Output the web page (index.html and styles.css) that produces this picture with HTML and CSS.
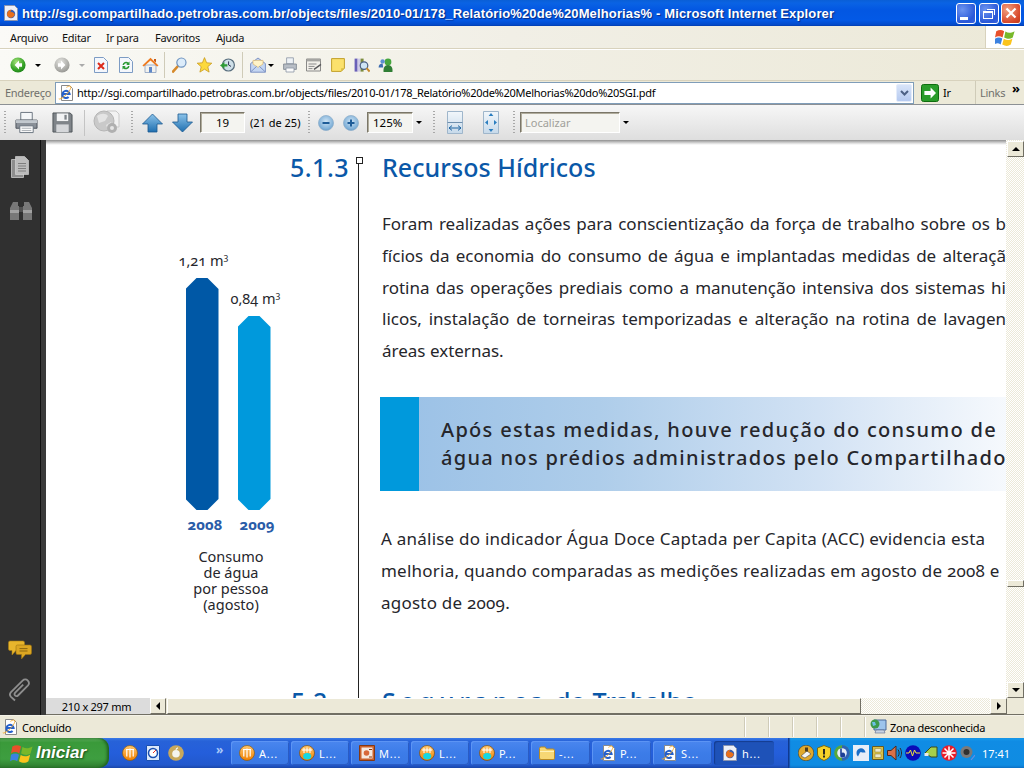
FILE: index.html
```html
<!DOCTYPE html>
<html lang="pt-BR">
<head>
<meta charset="utf-8">
<title>Relatório de Melhorias do SGI</title>
<link rel="stylesheet" href="styles.css">
</head>
<body>
<svg class="defs" width="0" height="0" aria-hidden="true">
  <defs>
    <radialGradient id="gGreen" cx=".4" cy=".3" r=".8"><stop offset="0" stop-color="#a6e27a"/><stop offset=".6" stop-color="#3aa52a"/><stop offset="1" stop-color="#127a12"/></radialGradient>
    <radialGradient id="gGray" cx=".4" cy=".3" r=".8"><stop offset="0" stop-color="#e4e4e0"/><stop offset="1" stop-color="#8e8e8a"/></radialGradient>
    <radialGradient id="gBtn" cx=".5" cy=".4" r=".7"><stop offset="0" stop-color="#cfe4f5"/><stop offset=".7" stop-color="#7fb0d8"/><stop offset="1" stop-color="#4d86b8"/></radialGradient>
    <linearGradient id="gArrow" x1="0" y1="0" x2="0" y2="1"><stop offset="0" stop-color="#8cc3ea"/><stop offset="1" stop-color="#1f6fb0"/></linearGradient>
    <linearGradient id="gOrange" x1="0" y1="0" x2="0" y2="1"><stop offset="0" stop-color="#ffc870"/><stop offset="1" stop-color="#f08000"/></linearGradient>
    <linearGradient id="gFit" x1="0" y1="0" x2="0" y2="1"><stop offset="0" stop-color="#f2f7fb"/><stop offset="1" stop-color="#c6d9ea"/></linearGradient>
    <symbol id="iBack" viewBox="0 0 16 16"><circle cx="8" cy="8" r="7.600" fill="url(#gGreen)"/><path d="M9 3.600 4.600 8 9 12.400V9.800h3V6.200H9z" fill="#fff"/></symbol>
    <symbol id="iFwd" viewBox="0 0 16 16"><circle cx="8" cy="8" r="7.600" fill="url(#gGray)"/><path d="M7 3.600 11.400 8 7 12.400V9.800H4V6.200h3z" fill="#fff"/></symbol>
    <symbol id="iStop" viewBox="0 0 14 16"><path d="M.5.5h9l4 4v11H.5z" fill="#f4f7fc" stroke="#7d9cc4"/><path d="M4 6l6 6m0-6-6 6" stroke="#dc2a1a" stroke-width="2"/></symbol>
    <symbol id="iRefresh" viewBox="0 0 14 16"><path d="M.5.5h9l4 4v11H.5z" fill="#f4f7fc" stroke="#7d9cc4"/><path d="M3.500 8a3.600 3.600 0 0 1 6-2.400l1-1v3.400H7.200l1.100-1.100A2 2 0 0 0 5 8zM10.500 9a3.600 3.600 0 0 1-6 2.400l-1 1V9h3.300l-1.100 1.100A2 2 0 0 0 9 9z" fill="#2b9a35"/></symbol>
    <symbol id="iHome" viewBox="0 0 17 16"><path d="M3 8h11v7.500H3z" fill="#f2f2ee" stroke="#8aa0c0" stroke-width=".8"/><path d="M7 10h3v5.500H7z" fill="#5f88c8"/><path d="M.4 8.600 8.500.8l8 7.800-1.400 1L8.500 3.400 1.800 9.600z" fill="#ee7a1e"/><path d="M12 2h2v3.500L12 4z" fill="#c95a14"/></symbol>
    <symbol id="iSearch" viewBox="0 0 15 16"><path d="M1 14.600 6 9" stroke="#d68a2c" stroke-width="2.600" stroke-linecap="round"/><circle cx="9.400" cy="5.600" r="4.600" fill="#dcecfa" stroke="#6f94c0" stroke-width="1.200"/></symbol>
    <symbol id="iStar" viewBox="0 0 15 16"><path d="M7.500.6l2.100 5.200 5.200.4-4 3.500 1.300 5.400-4.600-2.900-4.600 2.900 1.300-5.400-4-3.500 5.200-.4z" fill="#fcd93c" stroke="#c99a20" stroke-width=".8"/></symbol>
    <symbol id="iHist" viewBox="0 0 15 16"><circle cx="8.400" cy="8" r="6" fill="#cfe0e8" stroke="#566c7c" stroke-width="1.200"/><path d="M8.600 4.400V8l2.400 1.400" stroke="#335" fill="none"/><path d="M0 8.400 4.400 5v2.200h3v2.400h-3v2.200z" fill="#2d9a35"/></symbol>
    <symbol id="iMail" viewBox="0 0 16 16"><path d="M.6 6.600 8 1l7.400 5.600v8.600H.6z" fill="#c4d6f2" stroke="#7f93c4"/><path d="M3 7V3.400h10V7L8 10.400z" fill="#fff3c8" stroke="#d8b060" stroke-width=".6"/><path d="M.8 14.800 6.600 9.400M15.200 14.800 9.400 9.400" stroke="#7f93c4"/></symbol>
    <symbol id="iPrintS" viewBox="0 0 14 16"><path d="M3.600.8h6.800v6H3.600z" fill="#eef2f6" stroke="#8a96a4" stroke-width=".8"/><path d="M.6 7h12.800v5.400H.6z" fill="#b8bec6" stroke="#7a828c" stroke-width=".8"/><path d="M3 11h8v4H3z" fill="#fbfbfb" stroke="#8a96a4" stroke-width=".8"/></symbol>
    <symbol id="iEdit" viewBox="0 0 16 16"><path d="M.5 2h14v12H.5z" fill="#f2f0ea" stroke="#8a8a88"/><path d="M.5 2h14v2.400H.5z" fill="#a5a5a2"/><path d="M2.500 7h8M2.500 9.400h6M2.500 11.600h4" stroke="#8c8c8c"/><path d="M8 12.400l7-5" stroke="#58585a" stroke-width="1.400"/></symbol>
    <symbol id="iNote" viewBox="0 0 14 14"><path d="M.6.6h12.800v9.600l-3.200 3.200H.6z" fill="#fbe16c" stroke="#c2a02c"/><path d="M10.200 13.400v-3.200h3.200z" fill="#d8bc40"/></symbol>
    <symbol id="iRes" viewBox="0 0 16 16"><path d="M.6 1.600h3v13h-3z" fill="#6a60b8"/><path d="M3.600 1.600h3v13h-3z" fill="#d0cce8"/><path d="M6.600 1.600h3v13h-3z" fill="#7b8c3c"/><circle cx="10" cy="8.600" r="3.800" fill="#cfe5f5" stroke="#4a5f80" stroke-width="1.200"/><path d="M12.600 11.200l3 3.400" stroke="#c88a2a" stroke-width="2"/></symbol>
    <symbol id="iMsn" viewBox="0 0 16 16"><circle cx="10" cy="5" r="3.400" fill="#46a63e"/><path d="M5.600 15c-.6-4 1-7 4.400-7s5 3 4.400 7z" fill="#2f7e34"/><circle cx="4.600" cy="4.400" r="2.200" fill="#5c8fd0"/><path d="M.6 10.400c0-2.400 1.600-4 4-4l.6 4z" fill="#3c6cb0"/></symbol>
    <symbol id="iIE" viewBox="0 0 16 16"><path d="M3.500.5h8l3 3v12h-11z" fill="#fff" stroke="#8a8a8a"/><path d="M4.800 9h6.800a3.600 3.600 0 1 0-1 3" fill="none" stroke="#2460cc" stroke-width="2"/><path d="M.8 13.800c1 1 5-1.400 8.600-5.400 3-3.400 4.200-6.400 3-7.200-.8-.4-2.600.2-4 1.200" fill="none" stroke="#f2a92c" stroke-width=".9"/></symbol>
    <symbol id="iGo" viewBox="0 0 18 18"><rect x=".5" y=".5" width="17" height="17" rx="2" fill="#2a9c2a" stroke="#0f6d0f"/><path d="M9.600 3.400 15 9l-5.400 5.600V11H3.400V7h6.200z" fill="#fff"/></symbol>
    <symbol id="iFox" viewBox="0 0 16 16"><path d="M1.500.5h10l3 3v12h-13z" fill="#eef0f8" stroke="#8a94b0"/><circle cx="8" cy="9" r="4.200" fill="#3a5fb0"/><path d="M4 9.600c0-3 2-4.800 4.600-4.800-1 .8-1.200 1.600-1 2.400 1.600-.4 3.600.6 4.200 2.400-.6 2-2.200 3.200-4 3.200-2 0-3.800-1.400-3.800-3.200z" fill="#e8701c"/></symbol>
    <symbol id="iPrint" viewBox="0 0 24 24"><path d="M6 1.500h12v8H6z" fill="#f4f6f8" stroke="#6a7480"/><path d="M1 9.500h22v8.500H1z" fill="#8a9098" stroke="#4c545c"/><path d="M1 9.500h22v3H1z" fill="#c2c8ce"/><path d="M5 15.500h14v7H5z" fill="#fbfbfb" stroke="#6a7480"/><path d="M7 18h10M7 20.400h10" stroke="#a8aeb4"/></symbol>
    <symbol id="iSave" viewBox="0 0 22 22"><path d="M1 1h18l2 2v18H1z" fill="#7f8489" stroke="#4e5358"/><path d="M5 1.500h12v8H5z" fill="#f2f3f4"/><path d="M13 3h2.400v5H13z" fill="#7f8489"/><path d="M4.500 13h13v8h-13z" fill="#d5d7da"/></symbol>
    <symbol id="iGlobe" viewBox="0 0 27 25"><path d="M14 1h9l3 3v13H14z" fill="#f2f2f2" stroke="#c9c9c9"/><circle cx="11" cy="11" r="10" fill="#c9c9c9" stroke="#b5b5b5"/><path d="M4 6c4-3 9-3 11 0l-3 5-6 2zM13 15l5-3 1 5-4 3z" fill="#e4e4e4"/><circle cx="19" cy="18" r="5" fill="#b0b0b0"/><circle cx="19" cy="18" r="2" fill="#e6e6e6"/></symbol>
    <symbol id="iUp" viewBox="0 0 21 20"><path d="M10.500 1 20.500 11H15v8H6v-8H.5z" fill="url(#gArrow)" stroke="#19598f" stroke-width=".8"/></symbol>
    <symbol id="iDown" viewBox="0 0 21 20"><path d="M10.500 19 20.500 9H15V1H6v8H.5z" fill="url(#gArrow)" stroke="#19598f" stroke-width=".8"/></symbol>
    <symbol id="iMinus" viewBox="0 0 16 16"><circle cx="8" cy="8" r="7.500" fill="url(#gBtn)" stroke="#8fb0cc" stroke-width=".8"/><path d="M4.500 7h7v2h-7z" fill="#1e5c98"/></symbol>
    <symbol id="iPlus" viewBox="0 0 16 16"><circle cx="8" cy="8" r="7.500" fill="url(#gBtn)" stroke="#8fb0cc" stroke-width=".8"/><path d="M7 4.500h2V7h2.500v2H9v2.500H7V9H4.500V7H7z" fill="#1e5c98"/></symbol>
    <symbol id="iFitW" viewBox="0 0 16 23"><path d="M.5.5h15v22H.5z" fill="url(#gFit)" stroke="#9fb6cb"/><path d="M.5 11.500h15" stroke="#6f8fad"/><path d="M2 17h12M2 17l3-2.400M2 17l3 2.400M14 17l-3-2.400M14 17l-3 2.400" stroke="#1f64a0" fill="none"/></symbol>
    <symbol id="iFitP" viewBox="0 0 16 23"><path d="M.5.5h15v22H.5z" fill="url(#gFit)" stroke="#9fb6cb"/><path d="M8 2 5.600 5h4.800zM8 21l-2.400-3h4.800zM2 11.500l3-2.400v4.800zM14 11.500l-3-2.400v4.800z" fill="#2b7ec0"/></symbol>
    <symbol id="iPages" viewBox="0 0 18 22"><path d="M.5 3.500h12v18H.5z" fill="#8d8d8d" stroke="#b4b4b4"/><path d="M4.500.5h9l4 4v14h-13z" fill="#bdbdbd" stroke="#dadada" stroke-width=".6"/><path d="M7 7.500h8M7 10h8M7 12.500h8M7 15h8" stroke="#7e7e7e"/></symbol>
    <symbol id="iBino" viewBox="0 0 22 18"><path d="M3 0h5v4h1v14H0V6zM19 0h-5v4h-1v14h9V6z" fill="#787878"/><path d="M0 8h9v3H0zM13 8h9v3h-9z" fill="#a2a2a2"/><path d="M9 5h4v5H9z" fill="#505050"/></symbol>
    <symbol id="iCmt" viewBox="0 0 24 20"><path d="M2 1h13q1.500 0 1.500 1.500V9q0 1.500-1.500 1.500H8L4 15v-4.500H2Q.5 10.500.5 9V2.500Q.5 1 2 1z" fill="#e8b52c" stroke="#a87e14" stroke-width=".6"/><path d="M9.500 5H22q1.500 0 1.500 1.500V13q0 1.500-1.500 1.500h-4.500L13.500 19v-4.500h-4Q8 14.500 8 13V6.500Q8 5 9.500 5z" fill="#dca622" stroke="#9c7410" stroke-width=".6"/><path d="M11.500 8.600h8M11.500 11h8" stroke="#8a6610"/></symbol>
    <symbol id="iClip" viewBox="0 0 22 24"><path d="M6 22.500 2 18.800c-1.400-1.400-1.200-3.300 0-4.600L13.600 2.600c1.600-1.600 3.800-1.500 5.200 0s1.400 3.600 0 5.100L9 17.500c-.9.900-2.100.9-2.900 0s-.7-2 .1-2.900l8-8" fill="none" stroke="#8e8e8e" stroke-width="1.800"/></symbol>
    <symbol id="iFlag" viewBox="0 0 24 24"><path d="M1.500 5C5 3 8 3 11 5l-2 7.500C6 10.500 3 10.500 0 12.500z" fill="#e8502a"/><path d="M12.500 5.500C16 7.500 19 7.500 23.500 5l-2.200 7.500c-3.300 2.200-6.300 2-10.300 0z" fill="#78b82a"/><path d="M0 14c3-2 6-2 8.700-.2L6.800 21C4 19 2 19-1 21z" fill="#3c82e0"/><path d="M10.600 14.200c3.400 2 6.400 2 10.300-.2L19 21c-3.400 2.400-6.400 2.200-10.300 0z" fill="#fbc41c"/></symbol>
    <symbol id="iOrange" viewBox="0 0 16 16"><circle cx="8" cy="8" r="7.500" fill="url(#gOrange)" stroke="#8a5a10" stroke-width=".7"/><path d="M4 4.500h8M4.800 4.500v7M8 3.500v9M11.200 4.500v7" stroke="#fff" stroke-width="1.200" fill="none"/></symbol>
    <symbol id="iOrangeC" viewBox="0 0 16 16"><circle cx="8" cy="8" r="7.500" fill="url(#gOrange)" stroke="#7a4a10" stroke-width=".7"/><path d="M3 5h10M5 3v5M8 2.500v5M11 3v5" stroke="#fff" stroke-width="1"/><ellipse cx="8.200" cy="11.300" rx="4" ry="3.200" fill="#12d8e6"/></symbol>
    <symbol id="iPpt" viewBox="0 0 16 16"><path d="M.5.5h15v15H.5z" fill="#c9602c" stroke="#843814"/><path d="M2.500 2.500h11v11h-11z" fill="#f6e9e0"/><circle cx="7.500" cy="8" r="2.800" fill="#d8683a"/><path d="M10 11.500h3v1h-3zM10 4h3v1h-3z" fill="#843814"/></symbol>
    <symbol id="iFolder" viewBox="0 0 16 14"><path d="M.5 2.500Q.5 1 2 1h4l1.500 2H14q1.500 0 1.500 1.500v8Q15.500 13.500 14 13.500H2Q.5 13.500.5 12z" fill="#f7d774" stroke="#b88a24"/><path d="M1 5.500h14" stroke="#fff2b8"/></symbol>
    <symbol id="iQL" viewBox="0 0 16 16"><path d="M1.500.5h13v15h-13z" fill="#dbe8fa" stroke="#1a4fb0"/><circle cx="8" cy="8" r="4.500" fill="#fff" stroke="#1a4fb0" stroke-width="1.500"/><path d="M8 8l3-3" stroke="#e83020"/></symbol>
    <symbol id="iApple" viewBox="0 0 16 16"><circle cx="8" cy="8" r="7.800" fill="#c8a85c"/><circle cx="8" cy="8.800" r="3.800" fill="#f4f4f0"/><path d="M8 5c0-1.200.8-2 2-2.200" stroke="#f4f4f0" stroke-width="1.200" fill="none"/></symbol>
    <symbol id="iT1" viewBox="0 0 16 16"><circle cx="8" cy="8" r="7.800" fill="#e0a82c" stroke="#3a2a10" stroke-width=".5"/><path d="M3 11l6-5 4 3-6 4z" fill="#f4f4f4" stroke="#333" stroke-width=".5"/><path d="M7 2.500h3v4H7z" fill="#4a3c20"/></symbol>
    <symbol id="iT2" viewBox="0 0 14 16"><path d="M7 .5 13.500 3v6q0 4-6.500 6.500Q.5 13 .5 9V3z" fill="#f5d228" stroke="#7a6a18"/><path d="M6 4h2v5.500H6zM6 10.500h2v2H6z" fill="#2a2a20"/></symbol>
    <symbol id="iT3" viewBox="0 0 16 16"><circle cx="8" cy="8" r="7.800" fill="#58a83a"/><path d="M8 .2A7.800 7.800 0 0 1 8 15.800z" fill="#2d62b8"/><circle cx="8" cy="8" r="4.800" fill="#e8eef8"/><path d="M6.200 3.500h1.600v4.200a2.500 2.500 0 1 1-1.600 2z" fill="#1d3f96"/></symbol>
    <symbol id="iT4" viewBox="0 0 16 16"><path d="M0 0h16v16H0z" fill="#e8eef8"/><path d="M3.500 8a4.500 4.500 0 0 1 9-.5H9a1.500 1.500 0 0 0-2.500 1L5 11.500A4.500 4.500 0 0 1 3.500 8z" fill="#1a6ec8"/></symbol>
    <symbol id="iT5" viewBox="0 0 12 16"><path d="M.5 1.500h11v13H.5z" fill="#d8c048" stroke="#6a5a20"/><path d="M3 3.500h6v3.500H3zM3 9h6v3.500H3z" fill="#eee8c8" stroke="#8a7a30" stroke-width=".5"/></symbol>
    <symbol id="iT6" viewBox="0 0 15 16"><path d="M.5 5.500h3.500L9 1v14L4 10.500H.5z" fill="#d87048" stroke="#4a2a20"/><path d="M11 4.500c1.500 2 1.500 5 0 7M13 3c2 3 2 7 0 10" stroke="#2a2a2a" fill="none"/></symbol>
    <symbol id="iT7" viewBox="0 0 16 16"><circle cx="8" cy="8" r="7.800" fill="#0a0ab8"/><path d="M1 8h3l1.500-3 2 6 2-6 1.500 3h4" stroke="#f2e43c" fill="none"/></symbol>
    <symbol id="iT8" viewBox="0 0 14 14"><path d="M1 7 7 1h6v10H7z" fill="#a4d04a" stroke="#3a4a20"/><path d="M.5 7h4v3h-4z" fill="#eaeaea"/></symbol>
    <symbol id="iT9" viewBox="0 0 16 16"><circle cx="8" cy="8" r="7.800" fill="#e81c28"/><path d="M8 1.500v13M1.500 8h13M3.500 3.500l9 9M12.500 3.500l-9 9" stroke="#fff" stroke-width="1.500"/></symbol>
    <symbol id="iT10" viewBox="0 0 15 16"><circle cx="6.500" cy="7" r="6" fill="#7a7a7a"/><circle cx="6.500" cy="7" r="3" fill="#303030"/><path d="M11 15 15 10" stroke="#6a8ee0" stroke-width="1.200"/></symbol>
    <symbol id="iZone" viewBox="0 0 18 17"><path d="M4 1h12v10H4z" fill="#9cc4ec" stroke="#4a6a9a"/><path d="M6 11h8l1 3H5z" fill="#c8d4e4" stroke="#5a6a8a" stroke-width=".6"/><circle cx="5" cy="5" r="4.500" fill="#3c9a4c"/><path d="M2 3h3l1 3-3 1z" fill="#6fc0e8"/></symbol>
  </defs>
</svg>

<div class="window">
  <header class="titlebar">
    <svg class="title-ico" width="16" height="16"><use href="#iFox"/></svg>
    <span class="title-text">http://sgi.compartilhado.petrobras.com.br/objects/files/2010-01/178_Relatório%20de%20Melhorias% - Microsoft Internet Explorer</span>
    <div class="wbtns">
      <span class="wbtn"><span class="gl-min"></span></span>
      <span class="wbtn"><span class="gl-max"></span></span>
      <span class="wbtn wclose"><svg width="12" height="12" viewBox="0 0 12 12"><path d="M1.500 1.500l9 9m0-9-9 9" stroke="#fff" stroke-width="2.200"/></svg></span>
    </div>
  </header>

  <nav class="menubar">
    <span class="menu-item">Arquivo</span><span class="menu-item">Editar</span><span class="menu-item">Ir para</span><span class="menu-item">Favoritos</span><span class="menu-item">Ajuda</span>
    <div class="brand"><svg width="20" height="20"><use href="#iFlag"/></svg></div>
  </nav>

  <div class="ietools">
    <svg width="16" height="16"><use href="#iBack"/></svg><span class="caret ml9"></span>
    <svg class="ml13" width="16" height="16"><use href="#iFwd"/></svg><span class="caret caret-off ml9"></span>
    <svg class="ml9" width="14" height="16"><use href="#iStop"/></svg>
    <svg class="ml11" width="14" height="16"><use href="#iRefresh"/></svg>
    <svg class="ml9" width="17" height="16"><use href="#iHome"/></svg>
    <span class="vsep ml5"></span>
    <svg class="ml7" width="15" height="16"><use href="#iSearch"/></svg>
    <svg class="ml10" width="15" height="16"><use href="#iStar"/></svg>
    <svg class="ml8" width="15" height="16"><use href="#iHist"/></svg>
    <span class="vsep ml7"></span>
    <svg class="ml7" width="16" height="16"><use href="#iMail"/></svg><span class="caret ml2"></span>
    <svg class="ml9" width="14" height="16"><use href="#iPrintS"/></svg>
    <svg class="ml9" width="16" height="16"><use href="#iEdit"/></svg>
    <svg class="ml9" width="14" height="14"><use href="#iNote"/></svg>
    <svg class="ml9" width="16" height="16"><use href="#iRes"/></svg>
    <svg class="ml8" width="16" height="16"><use href="#iMsn"/></svg>
  </div>

  <div class="addressbar">
    <span class="addr-label">Endereço</span>
    <div class="addr-input">
      <svg width="16" height="16"><use href="#iIE"/></svg>
      <span class="addr-url">http://sgi.compartilhado.petrobras.com.br/objects/files/2010-01/178_Relatório%20de%20Melhorias%20do%20SGI.pdf</span>
      <span class="addr-drop"><svg width="9" height="6" viewBox="0 0 9 6"><path d="M1 1l3.500 3.500L8 1" fill="none" stroke="#4d6185" stroke-width="2"/></svg></span>
    </div>
    <svg class="go" width="18" height="18"><use href="#iGo"/></svg>
    <span class="go-text">Ir</span>
    <span class="links">Links</span>
    <span class="chev">»</span>
  </div>

  <div class="acrotools">
    <span class="grip"></span>
    <svg class="ml9" width="23" height="23"><use href="#iPrint"/></svg>
    <svg class="ml14" width="21" height="21"><use href="#iSave"/></svg>
    <span class="vsep vsep-g ml11"></span>
    <svg class="ml8" width="27" height="25"><use href="#iGlobe"/></svg>
    <span class="grip ml11"></span>
    <svg class="ml9" width="21" height="20"><use href="#iUp"/></svg>
    <svg class="ml9" width="21" height="20"><use href="#iDown"/></svg>
    <span class="field field-page ml7">19</span>
    <span class="pagecount">(21 de 25)</span>
    <span class="grip ml7"></span>
    <svg class="ml8" width="16" height="16"><use href="#iMinus"/></svg>
    <svg class="ml9" width="16" height="16"><use href="#iPlus"/></svg>
    <span class="field field-zoom ml8">125%</span>
    <span class="caret ml3"></span>
    <span class="grip ml11"></span>
    <svg class="ml12" width="16" height="23"><use href="#iFitW"/></svg>
    <svg class="ml20" width="16" height="23"><use href="#iFitP"/></svg>
    <span class="grip ml14"></span>
    <span class="field field-find ml5">Localizar</span>
    <span class="caret ml3"></span>
  </div>

  <main class="viewer">
    <aside class="navpanel">
      <svg class="nav-pages" width="18" height="22"><use href="#iPages"/></svg>
      <svg class="nav-bino" width="22" height="18"><use href="#iBino"/></svg>
      <svg class="nav-cmt" width="24" height="20"><use href="#iCmt"/></svg>
      <svg class="nav-clip" width="22" height="24"><use href="#iClip"/></svg>
    </aside>
    <div class="docarea">
      <div class="docrow">
        <article class="page">
          <div class="side">
            <h2 class="secnum">5.1.3</h2>
            <div class="chart">
              <div class="chart-col">
                <span class="chart-val">1,21 m<sup>3</sup></span>
                <span class="bar bar-a"></span>
                <span class="chart-year">2008</span>
              </div>
              <div class="chart-col">
                <span class="chart-val">0,84 m<sup>3</sup></span>
                <span class="bar bar-b"></span>
                <span class="chart-year">2009</span>
              </div>
            </div>
            <p class="caption">Consumo<br>de água<br>por pessoa<br>(agosto)</p>
          </div>
          <div class="main">
            <h2 class="sectitle">Recursos Hídricos</h2>
            <div class="para">
              <div class="jline">Foram realizadas ações para conscientização da força de trabalho sobre os b</div>
              <div class="jline">fícios da economia do consumo de água e implantadas medidas de alteraçã</div>
              <div class="jline">rotina das operações prediais como a manutenção intensiva dos sistemas hi</div>
              <div class="jline">licos, instalação de torneiras temporizadas e alteração na rotina de lavagen</div>
              <div class="pline">áreas externas.</div>
            </div>
            <div class="callout">
              <div class="callout-mark"></div>
              <p class="callout-text">Após estas medidas, houve redução do consumo de<br>água nos prédios administrados pelo Compartilhado</p>
            </div>
            <div class="para para2">
              <div class="pline">A análise do indicador Água Doce Captada per Capita (ACC) evidencia esta</div>
              <div class="pline">melhoria, quando comparadas as medições realizadas em agosto de 2008 e</div>
              <div class="pline">agosto de 2009.</div>
            </div>
          </div>
          <div class="side side2"><h2 class="secnum">5.2</h2></div>
          <div class="main main2"><h2 class="sectitle"><span class="word1">Segurança</span> do Trabalho</h2></div>
        </article>
        <div class="vscroll">
          <span class="sbtn"><span class="tri tri-up"></span></span>
          <span class="vtrack"><span class="vthumb"></span></span>
          <span class="sbtn"><span class="tri tri-down"></span></span>
        </div>
      </div>
      <div class="hscrollrow">
        <span class="pagesize">210 x 297 mm</span>
        <span class="sbtn sbtn-h"><span class="tri tri-left"></span></span>
        <span class="hthumb"></span>
        <span class="htrack"></span>
        <span class="sbtn sbtn-h sbtn-r"><span class="tri tri-right"></span></span>
        <span class="corner"></span>
      </div>
    </div>
  </main>

  <footer class="statusbar">
    <svg class="st-ico" width="16" height="16"><use href="#iIE"/></svg>
    <span class="st-text">Concluído</span>
    <span class="st-cell"></span><span class="st-cell"></span><span class="st-cell"></span><span class="st-cell"></span><span class="st-cell"></span>
    <span class="st-zone"><svg width="18" height="17"><use href="#iZone"/></svg>Zona desconhecida</span>
  </footer>

  <div class="taskbar">
    <div class="start"><svg width="24" height="22"><use href="#iFlag"/></svg><span>Iniciar</span></div>
    <div class="quick">
      <svg width="16" height="16"><use href="#iOrange"/></svg>
      <svg width="16" height="16"><use href="#iQL"/></svg>
      <svg width="16" height="16"><use href="#iApple"/></svg>
      <span class="quick-more">»</span>
    </div>
    <div class="tasks">
      <span class="task"><svg width="16" height="16"><use href="#iOrange"/></svg>A...</span>
      <span class="task"><svg width="16" height="16"><use href="#iOrangeC"/></svg>L...</span>
      <span class="task"><svg width="16" height="16"><use href="#iPpt"/></svg>M...</span>
      <span class="task"><svg width="16" height="16"><use href="#iOrangeC"/></svg>L...</span>
      <span class="task"><svg width="16" height="16"><use href="#iOrangeC"/></svg>P...</span>
      <span class="task"><svg width="16" height="14"><use href="#iFolder"/></svg>-...</span>
      <span class="task"><svg width="16" height="16"><use href="#iIE"/></svg>P...</span>
      <span class="task"><svg width="16" height="16"><use href="#iIE"/></svg>S...</span>
      <span class="task task-on"><svg width="16" height="16"><use href="#iFox"/></svg>h...</span>
    </div>
    <div class="tray">
      <svg width="16" height="16"><use href="#iT1"/></svg>
      <svg width="14" height="16"><use href="#iT2"/></svg>
      <svg width="16" height="16"><use href="#iT3"/></svg>
      <svg width="16" height="16"><use href="#iT4"/></svg>
      <svg width="12" height="16"><use href="#iT5"/></svg>
      <svg width="15" height="16"><use href="#iT6"/></svg>
      <svg width="16" height="16"><use href="#iT7"/></svg>
      <svg width="14" height="14"><use href="#iT8"/></svg>
      <svg width="16" height="16"><use href="#iT9"/></svg>
      <svg width="15" height="16"><use href="#iT10"/></svg>
      <span class="clock">17:41</span>
    </div>
  </div>
</div>
</body>
</html>
```

FILE: styles.css
```css
* { box-sizing: border-box; }
html, body { margin: 0; padding: 0; }
body { width: 1024px; height: 768px; overflow: hidden; font-family: "Noto Sans", "DejaVu Sans", sans-serif; font-size: 11px; letter-spacing: -.27px; color: #000; background: #ece9d8; }
.defs { position: absolute; }
svg { display: block; flex: none; }
.window { display: flex; flex-direction: column; width: 1024px; height: 768px; }

.ml2 { margin-left: 2px; } .ml3 { margin-left: 3px; } .ml5 { margin-left: 5px; } .ml7 { margin-left: 7px; }
.ml8 { margin-left: 8px; } .ml9 { margin-left: 9px; } .ml10 { margin-left: 10px; } .ml11 { margin-left: 11px; }
.ml12 { margin-left: 12px; } .ml13 { margin-left: 13px; } .ml14 { margin-left: 14px; } .ml20 { margin-left: 20px; }

/* Title bar */
.titlebar { height: 26px; flex: none; display: flex; align-items: center; padding-left: 3px; background: linear-gradient(180deg, #0a5fd6 0, #0a63e4 3px, #0357e2 10px, #0359e6 20px, #0349c8 25px, #023aa8 26px); }
.title-ico { margin-right: 3px; }
.title-text { color: #fff; font: bold 13px "Liberation Sans", sans-serif; letter-spacing: .14px; text-shadow: 1px 1px 1px #0a2a80; white-space: nowrap; }
.wbtns { margin-left: auto; display: flex; gap: 3px; padding-right: 3px; }
.wbtn { width: 20px; height: 21px; border: 1px solid #fff; border-radius: 3px; background: radial-gradient(circle at 30% 30%, #6c94f0, #2a58d8 70%, #3a66e0); display: flex; align-items: center; justify-content: center; position: relative; }
.wclose { background: radial-gradient(circle at 30% 30%, #f0a080, #d8482a 70%, #c03a18); margin-left: -1px; }
.gl-min { width: 8px; height: 3px; background: #fff; align-self: flex-end; margin: 0 4px 3px 0; }
.gl-max { width: 10px; height: 8px; border: 1px solid #fff; border-top-width: 2px; box-shadow: 2px -2px 0 -1px #3a66e0, 3px -3px 0 -1px #fff; margin-top: 3px; margin-right: 2px; }

/* Menu */
.menubar { height: 23px; flex: none; display: flex; align-items: center; padding-left: 10px; background: linear-gradient(90deg, #fbfaf7, #f1efe6 50%, #ece9d8); border-bottom: 1px solid #d8d2bd; }
.menu-item { margin-right: 16px; font-size: 11px; color: #111; white-space: nowrap; }
.menu-item:nth-child(1) { width: 36px; } .menu-item:nth-child(2) { width: 28px; } .menu-item:nth-child(3) { width: 33px; } .menu-item:nth-child(4) { width: 45px; }
.brand { margin-left: auto; width: 39px; height: 22px; background: #fff; border-left: 1px solid #d8d2bd; display: flex; align-items: center; justify-content: center; }

/* IE toolbar */
.ietools { height: 32px; flex: none; display: flex; align-items: center; padding-left: 10px; background: linear-gradient(90deg, #fafaf6, #f1efe5 50%, #ece9d8); border-top: 1px solid #fff; border-bottom: 1px solid #d8d2bd; }
.caret { width: 0; height: 0; flex: none; border-left: 3px solid transparent; border-right: 3px solid transparent; border-top: 3px solid #000; }
.caret-off { border-top-color: #aaa; }
.vsep { width: 1px; height: 26px; flex: none; background: #cfcbb8; }
.vsep-g { background: #c4c4c4; }

/* Address */
.addressbar { height: 23px; flex: none; display: flex; align-items: center; background: #ece9d8; padding-left: 5px; position: relative; }
.addr-label { width: 50px; color: #70706c; white-space: nowrap; }
.addr-input { width: 859px; height: 22px; background: #fff; border: 1px solid #7f9db9; display: flex; align-items: center; padding-left: 2px; }
.addr-url { margin-left: 3px; font-size: 11px; white-space: nowrap; flex: 1; }
.addr-drop { width: 16px; height: 18px; margin-right: 1px; background: linear-gradient(#d8e4f8, #b6caf0); border: 1px solid #e4ecfa; border-radius: 2px; display: flex; align-items: center; justify-content: center; }
.go { margin-left: 7px; }
.go-text { margin-left: 4px; width: 32px; }
.links { border-left: 1px solid #cfcbb8; padding-left: 4px; height: 23px; line-height: 23px; color: #70706c; width: 37px; }
.chev { font-size: 13px; line-height: 13px; align-self: flex-start; margin-top: 1px; font-weight: bold; }

/* Acrobat toolbar */
.acrotools { height: 36px; flex: none; display: flex; align-items: center; padding-left: 4px; background: linear-gradient(#f7f7f7, #dedede); border-top: 1px solid #8c9094; letter-spacing: 0; }
.grip { width: 2px; height: 24px; flex: none; background: repeating-linear-gradient(#a8a8a8 0 1px, transparent 1px 3px); }
.field { height: 21px; flex: none; display: flex; align-items: center; background: #f4f4f0; border: 1px solid #fff; border-top: 1px solid #7a7668; border-left: 1px solid #7a7668; box-shadow: inset 1px 1px 0 #b0ac9c; font-size: 11.500px; }
.field-page { width: 45px; justify-content: center; }
.field-zoom { width: 46px; padding-left: 5px; }
.field-find { width: 100px; padding-left: 4px; color: #a0a09a; font-size: 11px; }
.pagecount { margin-left: 5px; width: 51px; white-space: nowrap; }

/* Viewer */
.viewer { flex: 1; min-height: 0; display: flex; background: #2f2f2f; }
.navpanel { width: 46px; flex: none; position: relative; display: flex; flex-direction: column; align-items: center; padding: 16px 5px 0 0; background: linear-gradient(90deg, #303030 0 40px, #111 40px 41px, #3a3a3a 41px 46px); }
.nav-pages { margin: 0 2px 0 0; }
.nav-bino { margin-top: 24px; }
.nav-cmt { margin-top: 420px; margin-right: 2px; }
.nav-clip { margin-top: 18px; margin-right: 2px; }
.docarea { flex: 1; min-width: 0; display: flex; flex-direction: column; margin-left: -4px; }
.docrow { flex: 1; min-height: 0; display: flex; padding-left: 4px; }

.page { flex: 1; min-width: 0; overflow: hidden; display: grid; grid-template-columns: 312px 1fr; grid-template-rows: 529px auto; padding-top: 17px; background: #fff linear-gradient(#8f8f8f, #d8d8d8 3px, #ededed 4px, #fff 5px) no-repeat 0 0 / 100% 5px; color: #26262b; font-family: "Noto Sans", sans-serif; font-variant-numeric: oldstyle-nums; letter-spacing: 0; }
.side { display: flex; flex-direction: column; }
.main { border-left: 1px solid #222; padding-left: 23px; position: relative; min-width: 0; }
.main:not(.main2)::before { content: ""; position: absolute; left: -3px; top: 0; width: 5px; height: 5px; background: #fff; border: 1px solid #222; }
.secnum { margin: 0; padding-right: 9px; text-align: right; font-family: "Noto Sans", sans-serif; font-weight: 500; font-size: 25px; line-height: 21px; color: #0a58a8; font-variant-numeric: lining-nums; letter-spacing: .5px; }
.sectitle { margin: 0; font-family: "Noto Sans", sans-serif; font-weight: 500; font-size: 25px; line-height: 21px; color: #0a58a8; white-space: nowrap; letter-spacing: .05px; }
.side2 .secnum { line-height: 30px; text-align: left; padding: 0 0 0 245px; }
.main2 .sectitle { line-height: 30px; }
.word1 { letter-spacing: 4.500px; }

.chart { display: flex; padding-left: 130px; margin-top: 78px; height: 277px; align-items: flex-end; }
.chart-col { width: 52px; display: flex; flex-direction: column; align-items: center; }
.chart-val { font-size: 14.500px; line-height: 16px; white-space: nowrap; margin: 0 0 10px 3px; }
.chart-val sup { font-size: 9px; line-height: 0; vertical-align: 6px; }
.bar { display: block; width: 33px; clip-path: polygon(11px 0, 22px 0, 100% 11px, 100% calc(100% - 11px), 22px 100%, 11px 100%, 0 calc(100% - 11px), 0 11px); }
.bar-a { height: 232px; background: #0058a6; }
.bar-b { height: 194px; background: #0099dc; }
.chart-year { margin: 5px 0 0 6px; font-size: 15px; font-weight: 700; line-height: 18px; color: #2a5ca8; }
.caption { margin: 15px 0 0 131px; width: 108px; font-size: 14.500px; line-height: 16px; text-align: center; }

.para { margin-top: 30px; font-size: 17px; line-height: 31.800px; width: 624px; }
.jline { text-align: justify; text-align-last: justify; height: 31.800px; overflow: hidden; }
.pline { white-space: nowrap; }
.callout { display: flex; height: 94px; margin: 30px 0 0 -2px; background: linear-gradient(90deg, #99c0e6, #aecdea 35%, #d2e2f4 70%, #f6f9fd 100%); }
.callout-mark { width: 39px; flex: none; background: #0099dc; }
.callout-text { margin: 19px 0 0 22px; font-size: 20px; line-height: 28px; font-weight: 500; letter-spacing: 1.300px; color: #26262b; white-space: nowrap; }
.para2 { margin-top: 32px; margin-left: -1px; letter-spacing: .23px; }

/* Scrollbars */
.vscroll { width: 18px; flex: none; display: flex; flex-direction: column; padding-top: 1px; background: repeating-conic-gradient(#ece9d8 0 25%, #fff 0 50%) 0 0 / 2px 2px; }
.sbtn { width: 17px; height: 16px; flex: none; margin-left: 1px; display: flex; align-items: center; justify-content: center; background: #ece9d8; border: 1px solid; border-color: #fff #716f64 #716f64 #fff; }
.vtrack { flex: 1; position: relative; }
.vthumb { position: absolute; left: 1px; right: 0; top: 423px; height: 7px; background: #ece9d8; border: 1px solid; border-color: #fff #716f64 #716f64 #fff; }
.tri { width: 0; height: 0; }
.tri-up { border: 4px solid transparent; border-top: 0; border-bottom: 4px solid #000; }
.tri-down { border: 4px solid transparent; border-bottom: 0; border-top: 4px solid #000; }
.tri-left { border: 4px solid transparent; border-left: 0; border-right: 4px solid #000; }
.tri-right { border: 4px solid transparent; border-right: 0; border-left: 4px solid #000; }

.hscrollrow { height: 17px; flex: none; display: flex; background: #ece9d8; border-bottom: 1px solid #716f64; }
.pagesize { width: 108px; flex: none; background: #dcdcdc; border-left: 1px solid #111; display: flex; align-items: center; justify-content: center; font-size: 11px; }
.sbtn-h { height: 16px; margin-left: 0; width: 16px; margin-right: 1px; }
.hthumb { width: 694px; flex: none; background: #ece9d8; border: 1px solid; border-color: #fff #716f64 #716f64 #fff; }
.htrack { flex: 1; background: repeating-conic-gradient(#ece9d8 0 25%, #fff 0 50%) 0 0 / 2px 2px; }
.sbtn-r { margin: 0; width: 17px; }
.corner { width: 17px; flex: none; }

/* Status bar */
.statusbar { height: 23px; flex: none; display: flex; align-items: center; background: #ece9d8; padding-left: 2px; border-top: 1px solid #f4f2e8; }
.st-text { margin-left: 4px; width: 723px; }
.st-cell { width: 24px; height: 20px; flex: none; border-left: 1px solid #fff; box-shadow: -1px 0 0 #cfcbb8; }
.st-zone { display: flex; align-items: center; gap: 2px; height: 20px; padding-left: 4px; border-left: 1px solid #fff; box-shadow: -1px 0 0 #cfcbb8; white-space: nowrap; }

/* Taskbar */
.taskbar { height: 30px; flex: none; display: flex; align-items: stretch; background: linear-gradient(#3a7be8 0, #2762d8 3px, #245edb 50%, #2258cc 90%, #1a46a8 100%); color: #fff; }
.start { width: 109px; flex: none; display: flex; align-items: center; padding: 0 0 0 10px; gap: 2px; border-radius: 0 10px 10px 0; background: linear-gradient(#5aaa5a, #3a9a3a 15%, #3e9e40 70%, #2d7a2d); font: italic bold 17px "Liberation Sans", sans-serif; letter-spacing: 0; text-shadow: 1px 1px 2px #1a4a1a; box-shadow: inset -2px 0 3px #1f5f1f; }
.quick { width: 122px; flex: none; display: flex; align-items: center; padding-left: 13px; gap: 7px; }
.quick-more { margin-left: 25px; margin-top: -8px; font-size: 12px; color: #a8c8f8; font-weight: bold; }
.tasks { display: flex; gap: 2px; width: 557px; flex: none; align-items: center; }
.task { width: 58px; height: 24px; flex: none; display: flex; align-items: center; gap: 4px; padding-left: 8px; border-radius: 3px; background: linear-gradient(#4a86ee, #3c7ce8 50%, #3a78e4); box-shadow: inset 1px 1px 0 #5c94f4, inset -1px -1px 0 #2a5cc4; font-size: 11px; letter-spacing: .8px; white-space: nowrap; }
.task:nth-child(6), .task:nth-child(7), .task:nth-child(8) { width: 59px; }
.task-on { width: 60px; background: #1e52b8; box-shadow: inset 1px 1px 1px #143c90; }
.tray { flex: 1; display: flex; align-items: center; gap: 3px; padding-left: 9px; background: linear-gradient(#18a0f0 0, #108ce4 3px, #0f8ce2 90%, #0c74c8 100%); border-left: 1px solid #0f3a90; box-shadow: inset 1px 0 1px #1a4fb0; }
.clock { margin-left: 4px; font-size: 11px; letter-spacing: 0; }
```
